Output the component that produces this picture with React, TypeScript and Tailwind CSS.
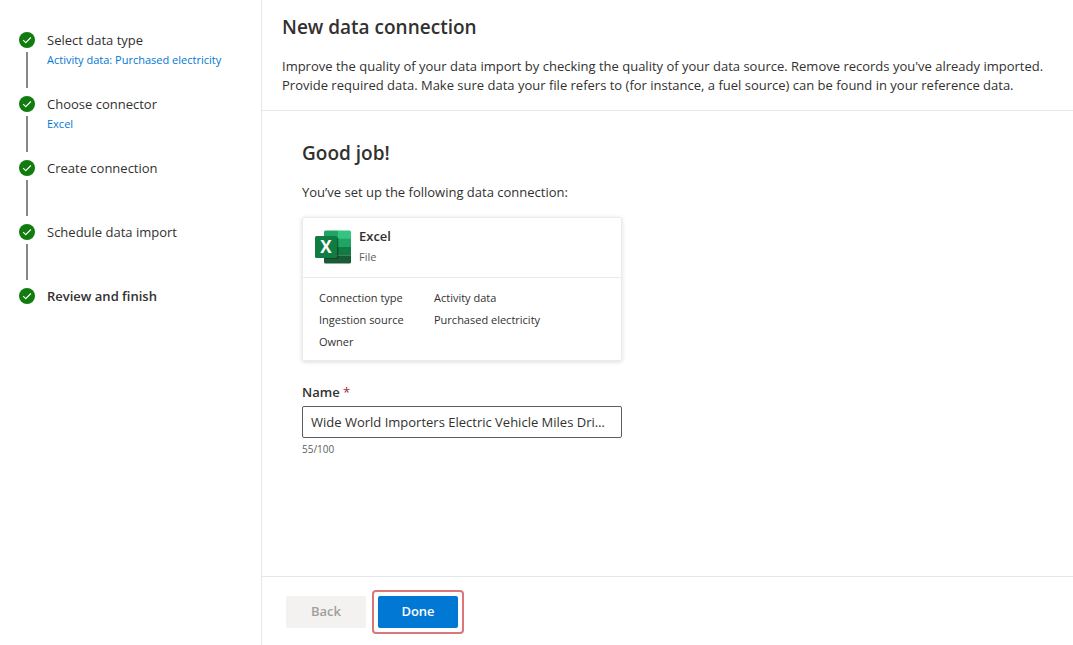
import { useState } from "react";

type Step = { label: string; detail?: string; current?: boolean };

const steps: Step[] = [
  { label: "Select data type", detail: "Activity data: Purchased electricity" },
  { label: "Choose connector", detail: "Excel" },
  { label: "Create connection" },
  { label: "Schedule data import" },
  { label: "Review and finish", current: true },
];

const facts = [
  ["Connection type", "Activity data"],
  ["Ingestion source", "Purchased electricity"],
  ["Owner", ""],
];

function StepMark() {
  return (
    <svg viewBox="0 0 16 16" className="size-4 shrink-0" aria-hidden="true">
      <circle cx="8" cy="8" r="8" fill="#107c10" />
      <path d="M4.2 8.2l2.5 2.5 5.2-5.2" fill="none" stroke="#fff" strokeWidth="1.1" />
    </svg>
  );
}

function ExcelLogo() {
  return (
    <svg viewBox="0 0 36 34" className="h-[34px] w-9 shrink-0" aria-hidden="true">
      <defs>
        <clipPath id="sheet">
          <rect x="9" y="0.5" width="27" height="33" rx="1.6" />
        </clipPath>
      </defs>
      <g clipPath="url(#sheet)">
        <rect x="9" y="0" width="14" height="9" fill="#21a366" />
        <rect x="23" y="0" width="13" height="9" fill="#33c481" />
        <rect x="9" y="8.7" width="14" height="8.3" fill="#107c41" />
        <rect x="23" y="8.7" width="13" height="8.3" fill="#21a366" />
        <rect x="9" y="17" width="14" height="8.3" fill="#185c37" />
        <rect x="23" y="17" width="13" height="8.3" fill="#107c41" />
        <rect x="9" y="25.3" width="27" height="9" fill="#185c37" />
        <rect x="9" y="7" width="14.5" height="22" rx="1.6" fill="#000" opacity="0.25" />
      </g>
      <rect x="0" y="6" width="22" height="22" rx="1.6" fill="#107c41" />
      <text
        x="11"
        y="23"
        textAnchor="middle"
        fill="#fff"
        className="font-['Open_Sans',sans-serif] text-[17px] font-bold"
      >
        X
      </text>
    </svg>
  );
}

export default function App() {
  const [name, setName] = useState("Wide World Importers Electric Vehicle Miles Driven Data");

  return (
    <div className="flex min-h-screen bg-white font-['Open_Sans',sans-serif] text-[13px] text-[#323130]">
      <nav aria-label="Progress" className="w-[262px] shrink-0 border-r border-[#e6e6e6] pt-8 pl-[19px]">
        <ol>
          {steps.map((step, i) => (
            <li key={step.label} className="flex h-16 gap-3">
              <div className="flex flex-col items-center gap-1">
                <StepMark />
                {i < steps.length - 1 && <div className="h-9 w-0.5 bg-[#8a8886]" />}
              </div>
              <div>
                <div className={step.current ? "leading-4 font-semibold" : "leading-4"}>{step.label}</div>
                {step.detail && (
                  <a href="#" className="mt-1 block text-[11px] leading-4 text-[#0078d4]">
                    {step.detail}
                  </a>
                )}
              </div>
            </li>
          ))}
        </ol>
      </nav>

      <div className="flex min-w-0 grow flex-col">
        <header className="border-b border-[#e6e6e6] pt-[13px] pr-3 pb-[15px] pl-5">
          <h1 className="text-[19px] leading-7 font-semibold">New data connection</h1>
          <p className="mt-4 leading-[19px]">
            Improve the quality of your data import by checking the quality of your data source. Remove records
            you've already imported. Provide required data. Make sure data your file refers to (for instance, a
            fuel source) can be found in your reference data.
          </p>
        </header>

        <main className="grow px-10 pt-7">
          <h2 className="text-[19px] leading-7 font-semibold">Good job!</h2>
          <p className="mt-[15px] leading-5">You’ve set up the following data connection:</p>

          <section className="mt-[15px] max-w-80 rounded-xs border border-[#edebe9] shadow-[0_1px_4px_rgba(0,0,0,0.15)]">
            <div className="flex items-center gap-2 border-b border-[#edebe9] px-3 pt-2 pb-[10px]">
              <ExcelLogo />
              <div className="flex flex-col gap-px">
                <h3 className="leading-5 font-semibold">Excel</h3>
                <p className="text-[11px] leading-5 text-[#605e5c]">File</p>
              </div>
            </div>
            <dl className="px-4 pt-[9px] pb-[7px] text-[11px]">
              {facts.map(([term, value]) => (
                <div key={term} className="flex leading-[22px]">
                  <dt className="w-[115px]">{term}</dt>
                  <dd>{value}</dd>
                </div>
              ))}
            </dl>
          </section>

          <div className="mt-[17px] flex max-w-80 flex-col">
            <label htmlFor="name" className="py-1 leading-5 font-semibold">
              Name <span className="font-normal text-[#a4262c]">*</span>
            </label>
            <input
              id="name"
              required
              maxLength={100}
              value={name}
              onChange={(e) => setName(e.target.value)}
              className="h-8 w-full rounded-xs border border-[#605e5c] pr-4 pl-2 text-ellipsis"
            />
            <span className="mt-[3px] text-[10px] leading-4 text-[#605e5c]">{name.length}/100</span>
          </div>
        </main>

        <footer className="flex items-center gap-1.5 border-t border-[#e6e6e6] px-6 pt-[13px] pb-[11px]">
          <button type="button" disabled className="h-8 w-20 rounded-xs bg-[#f3f2f1] font-semibold text-[#a19f9d]">
            Back
          </button>
          <div className="rounded-sm border-2 border-[#d9777b] p-1">
            <button type="button" className="block h-8 w-20 rounded-xs bg-[#0078d4] font-semibold text-white">
              Done
            </button>
          </div>
        </footer>
      </div>
    </div>
  );
}
